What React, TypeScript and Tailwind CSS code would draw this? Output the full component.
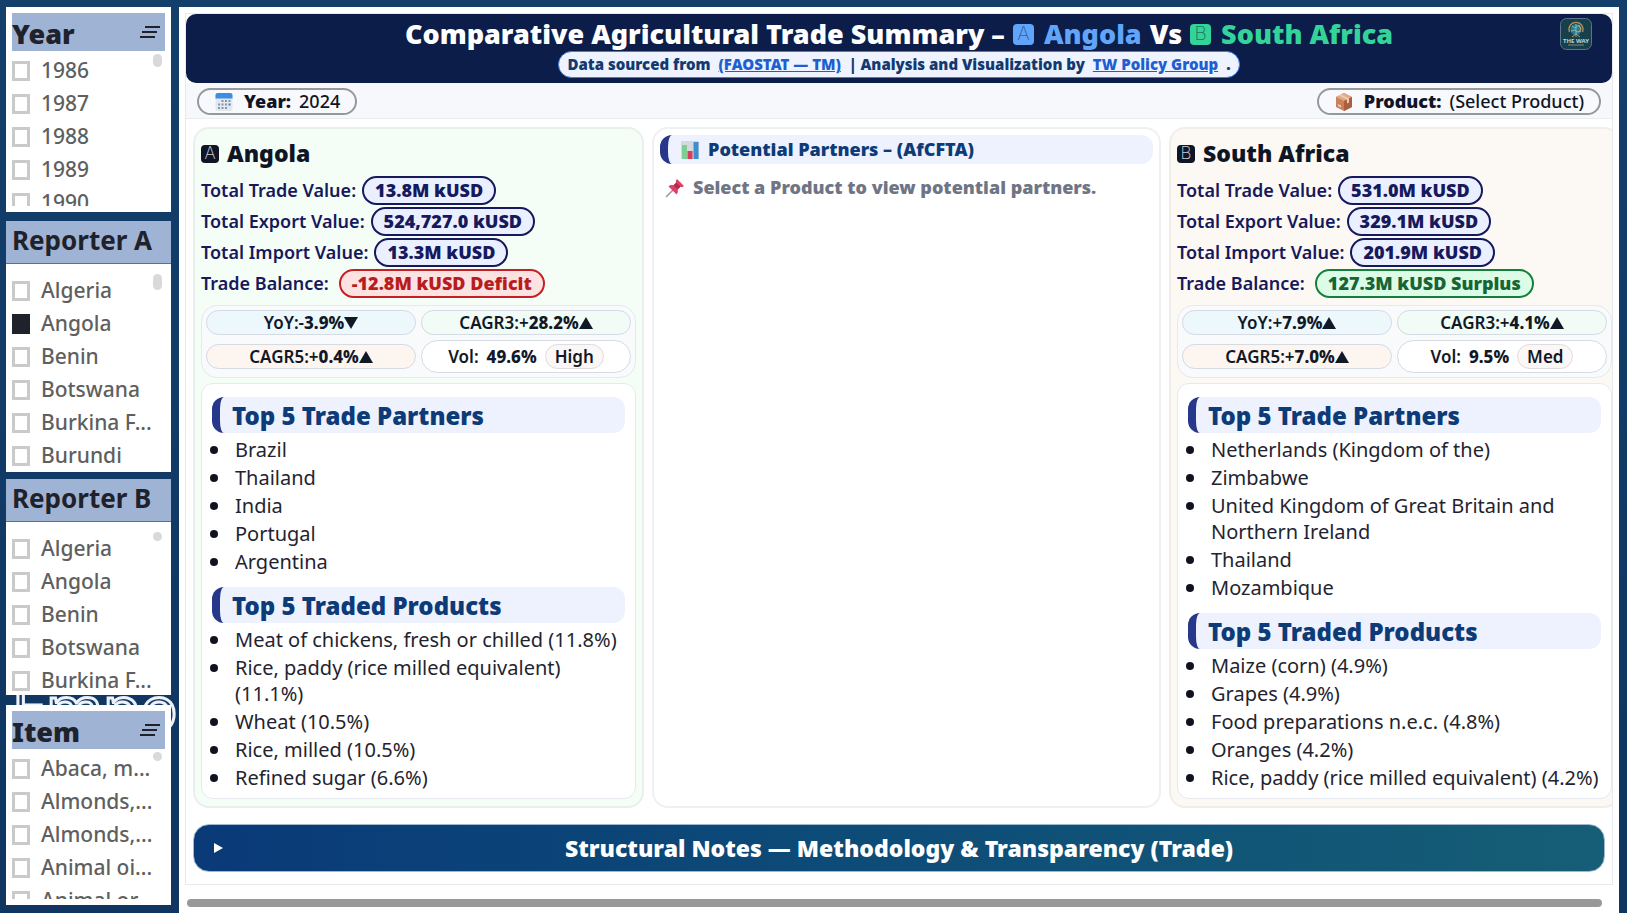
import type { ReactNode } from 'react';

type Tone = 'navy' | 'red' | 'green';

const tones: Record<Tone, string> = {
  navy: 'border-[#16195c] bg-[#eaf0ff] text-[#16195c]',
  red: 'border-[#c62026] bg-[#fde2e2] text-[#b91c1c]',
  green: 'border-[#15803d] bg-[#dcfce7] text-[#166534]',
};

const countryA = {
  letter: 'A',
  name: 'Angola',
  totals: [
    ['Total Trade Value:', '13.8M kUSD'],
    ['Total Export Value:', '524,727.0 kUSD'],
    ['Total Import Value:', '13.3M kUSD'],
  ],
  balance: '-12.8M kUSD Deficit',
  balanceTone: 'red' as Tone,
  yoy: ['-', '3.9%'],
  cagr3: ['+', '28.2%'],
  cagr5: ['+', '0.4%'],
  vol: ['49.6%', 'High'],
  partners: ['Brazil', 'Thailand', 'India', 'Portugal', 'Argentina'],
  products: [
    'Meat of chickens, fresh or chilled (11.8%)',
    'Rice, paddy (rice milled equivalent) (11.1%)',
    'Wheat (10.5%)',
    'Rice, milled (10.5%)',
    'Refined sugar (6.6%)',
  ],
};

const countryB: typeof countryA = {
  letter: 'B',
  name: 'South Africa',
  totals: [
    ['Total Trade Value:', '531.0M kUSD'],
    ['Total Export Value:', '329.1M kUSD'],
    ['Total Import Value:', '201.9M kUSD'],
  ],
  balance: '127.3M kUSD Surplus',
  balanceTone: 'green',
  yoy: ['+', '7.9%'],
  cagr3: ['+', '4.1%'],
  cagr5: ['+', '7.0%'],
  vol: ['9.5%', 'Med'],
  partners: [
    'Netherlands (Kingdom of the)',
    'Zimbabwe',
    'United Kingdom of Great Britain and Northern Ireland',
    'Thailand',
    'Mozambique',
  ],
  products: [
    'Maize (corn) (4.9%)',
    'Grapes (4.9%)',
    'Food preparations n.e.c. (4.8%)',
    'Oranges (4.2%)',
    'Rice, paddy (rice milled equivalent) (4.2%)',
  ],
};

function CalendarIcon() {
  return (
    <svg viewBox="0 0 20 20" className="w-5 h-5 shrink-0">
      <rect x="1.5" y="2" width="17" height="17" rx="2" fill="#e3e8ee" />
      <path d="M1.5 6.5V3a2 2 0 0 1 2-2h13a2 2 0 0 1 2 2v3.500z" fill="#3b8ee0" />
      <g fill="#8a97ab">
        <rect x="7.500" y="8" width="2" height="2" />
        <rect x="11" y="8" width="2" height="2" />
        <rect x="14.500" y="8" width="2" height="2" />
        <rect x="4" y="11.500" width="2" height="2" />
        <rect x="7.500" y="11.500" width="2" height="2" />
        <rect x="11" y="11.500" width="2" height="2" />
        <rect x="4" y="15" width="2" height="2" />
        <rect x="7.500" y="15" width="2" height="2" />
        <rect x="11" y="15" width="2" height="2" />
      </g>
      <rect x="14.500" y="11.500" width="2" height="2" fill="#2f7ad6" />
    </svg>
  );
}

function PackageIcon() {
  return (
    <svg viewBox="0 0 20 20" className="w-5 h-5 shrink-0">
      <path d="M10 1l8 4v10l-8 4-8-4V5z" fill="#c9825c" />
      <path d="M10 1l8 4-8 4-8-4z" fill="#e3a985" />
      <path d="M10 9l8-4v10l-8 4z" fill="#a9603f" />
      <path d="M5 3.500l8 4v4l2-1v-4l-8-4z" fill="#f0cdb4" />
      <path d="M4 12l3 1.500v2L4 14z" fill="#f0cdb4" />
    </svg>
  );
}

function ChartIcon() {
  return (
    <svg viewBox="0 0 20 20" className="w-5 h-5 shrink-0">
      <rect x="1" y="1" width="18" height="18" rx="1" fill="#d5d9de" />
      <rect x="2" y="5" width="5" height="14" fill="#7fcf95" />
      <rect x="7.500" y="11" width="5" height="8" fill="#dc3a5e" />
      <rect x="13.500" y="2" width="5" height="17" fill="#3f8fd0" />
    </svg>
  );
}

function PinIcon() {
  return (
    <svg viewBox="0 0 20 20" className="w-5 h-5 shrink-0">
      <path d="M8 12L1.500 18.500" stroke="#9a9aa5" strokeWidth="1.600" strokeLinecap="round" />
      <path d="M12 1l7 7-2 1.200-1.600-.4-2.800 2.800c.6 2 .2 3.600-1 4.900L3.500 8.400c1.300-1.200 3-1.600 4.900-1L11.200 4.600 10.800 3z" fill="#df3f63" />
      <path d="M11.200 4.600l4.200 4.200-2.800 2.800-4.200-4.200z" fill="#b9294c" />
    </svg>
  );
}

function LogoIcon() {
  return (
    <svg viewBox="0 0 32 32" className="w-8 h-8">
      <rect x=".5" y=".5" width="31" height="31" rx="6" fill="#17404a" stroke="#5a7590" />
      <path d="M9.500 14a7 7 0 1 1 13 0" fill="none" stroke="#b9905e" strokeWidth="1.300" />
      <circle cx="16" cy="11.500" r="5.500" fill="#2b7890" />
      <path d="M12 8l3 2 4-3 2 4M11 13l4-1 2 2 4-1M16 6v10" stroke="#8fbfae" strokeWidth=".9" fill="none" />
      <path d="M19 8l2 3-2 3" stroke="#c9a64e" strokeWidth="1" fill="none" />
      <path d="M16 15v4M12 19l4-3 4 3" stroke="#a59a7c" strokeWidth="1" fill="none" />
      <text x="16" y="25" textAnchor="middle" fontSize="6" fontWeight="700" fill="#c2d2d6">THE WAY</text>
      <path d="M8 27h16" stroke="#8ba3a8" strokeWidth=".8" />
    </svg>
  );
}

function TrendIcon({ down }: { down: boolean }) {
  return (
    <svg viewBox="0 0 14 12" className="w-[14px] h-3">
      <path d={down ? 'M0 0h14L7 12z' : 'M0 12h14L7 0z'} fill="#111827" />
    </svg>
  );
}

function LetterBox({ letter, className }: { letter: string; className: string }) {
  return (
    <span className={`inline-flex items-center justify-center rounded-sm font-['Inter'] font-extralight ${className}`}>
      {letter}
    </span>
  );
}

function FilterList({ items, checked, thumb }: { items: string[]; checked?: string; thumb: string }) {
  return (
    <div className="relative overflow-hidden flex-1">
      {items.map((item, i) => (
        <label key={i} className="flex items-center gap-[11px] h-[33px] text-[21px] font-medium text-[#5f5f5f]">
          <input
            type="checkbox"
            defaultChecked={item === checked}
            className="appearance-none w-[18px] h-5 shrink-0 border-3 border-[#cacaca] bg-white checked:bg-[#1f222b] checked:border-[#1f222b]"
          />
          <span className="whitespace-nowrap">{item}</span>
        </label>
      ))}
      <span className={`absolute right-[3px] top-0 w-[9px] rounded-full bg-[#d9d9dc] ${thumb}`} />
    </div>
  );
}

function SlicerHeader({ title }: { title: string }) {
  return (
    <div className="h-[38px] shrink-0 bg-[#9fb3d4] flex items-center justify-between pr-1">
      <h2 className="text-[27px] font-black text-[#1f222b] pt-1">{title}</h2>
      <svg viewBox="0 0 22 14" className="w-[22px] h-[14px]">
        <path d="M6 2h15M3 7h15M1 12h15" stroke="#1f222b" strokeWidth="2" />
      </svg>
    </div>
  );
}

function Heading({ children }: { children: ReactNode }) {
  return (
    <h3 className="h-9 pl-3 pt-[2px] flex items-center rounded-xl border-l-8 border-[#27378a] bg-[#eef1fe] text-[24px] font-black text-[#0d3b78]">
      {children}
    </h3>
  );
}

function Bullets({ items }: { items: string[] }) {
  return (
    <ul className="mt-1 text-[20px] leading-[26px] text-[#1f2430]">
      {items.map((item) => (
        <li
          key={item}
          className="relative pl-[23px] mb-[2px] before:absolute before:-left-[2px] before:top-[9px] before:size-2 before:rounded-full before:bg-[#10131f]"
        >
          {item}
        </li>
      ))}
    </ul>
  );
}

function Metric({ label, value, className }: { label: string; value: string[]; className: string }) {
  return (
    <div className={`h-[25px] rounded-full border border-[#d5dae3] flex items-center justify-center text-[17px] font-semibold text-[#111827] ${className}`}>
      {label}{value[0]}<b className="font-extrabold">{value[1]}</b>
      <TrendIcon down={value[0] === '-'} />
    </div>
  );
}

function CountryCard({ data, className }: { data: typeof countryA; className: string }) {
  return (
    <section className={`rounded-2xl border-2 px-[6px] pt-[7px] pb-[7px] flex flex-col ${className}`}>
      <h2 className="flex items-center gap-2 h-[35px] text-[23px] font-black text-[#0f1525]">
        <LetterBox letter={data.letter} className="w-[18px] h-[18px] text-[17px] bg-[#0f1525] text-[#c9cedb]" />
        {data.name}
      </h2>
      <div className="mt-1 text-[18px] font-semibold text-[#16195c]">
        {data.totals.map(([label, value]) => (
          <div key={label} className="flex items-center gap-[6px] h-[31px]">
            {label}
            <span className={`h-[29px] px-[11px] flex items-center rounded-full border-2 font-black ${tones.navy}`}>{value}</span>
          </div>
        ))}
        <div className="flex items-center gap-[10px] h-[31px]">
          Trade Balance:
          <span className={`h-[29px] px-[11px] flex items-center rounded-full border-2 font-black ${tones[data.balanceTone]}`}>{data.balance}</span>
        </div>
      </div>
      <div className="mt-[6px] p-1 grid grid-cols-2 gap-[5px] items-center rounded-2xl border border-[#e6e9ef] bg-[#f9fafc]">
        <Metric label="YoY:" value={data.yoy} className="bg-[#edf8fd]" />
        <Metric label="CAGR3:" value={data.cagr3} className="bg-[#f0fcf5]" />
        <Metric label="CAGR5:" value={data.cagr5} className="bg-[#fdf5ef]" />
        <div className="h-[33px] rounded-full border border-[#d5dae3] bg-white flex items-center justify-center gap-2 text-[17px] font-semibold text-[#111827]">
          Vol: <b className="font-extrabold">{data.vol[0]}</b>
          <span className="h-[25px] px-[9px] flex items-center rounded-full border border-[#e0dcdc] bg-[#fbf7f6]">{data.vol[1]}</span>
        </div>
      </div>
      <div className="mt-[5px] flex-1 rounded-xl border border-[#e6e9ef] bg-white px-[10px] pt-[13px] pb-[5px]">
        <Heading>Top 5 Trade Partners</Heading>
        <Bullets items={data.partners} />
        <div className="h-[10px]" />
        <Heading>Top 5 Traded Products</Heading>
        <Bullets items={data.products} />
      </div>
    </section>
  );
}

export default function App() {
  return (
    <div className="relative isolate flex gap-2 h-screen overflow-hidden bg-[#123a66] bg-linear-to-b from-[#143f6b] to-[#0f3560] pl-[6px] pr-2 pt-[7px] font-['Noto_Sans',sans-serif]">
      <div className="absolute -z-10 left-3 top-[676px] text-[61px] leading-none text-[#123a66] [-webkit-text-stroke:3px_#eef2f8]">Empo</div>

      <aside className="w-[165px] shrink-0 flex flex-col">
        <section className="h-[205px] bg-white p-[6px] flex flex-col">
          <SlicerHeader title="Year" />
          <div className="h-[3px]" />
          <FilterList items={['1986', '1987', '1988', '1989', '1990']} thumb="h-[13px]" />
        </section>
        <section className="mt-[9px] h-[251px] bg-white flex flex-col">
          <h2 className="h-[43px] shrink-0 px-[6px] pb-[3px] flex items-center bg-[#9fb3d4] border-b border-[#5d6f92] text-[26px] font-bold text-[#1f222b]">Reporter A</h2>
          <div className="flex flex-col flex-1 overflow-hidden px-[6px] pt-[10px]">
            <FilterList items={['Algeria', 'Angola', 'Benin', 'Botswana', 'Burkina F...', 'Burundi']} checked="Angola" thumb="h-4" />
          </div>
        </section>
        <section className="mt-[7px] h-[216px] bg-white flex flex-col">
          <h2 className="h-[43px] shrink-0 px-[6px] pb-[3px] flex items-center bg-[#9fb3d4] border-b border-[#5d6f92] text-[26px] font-bold text-[#1f222b]">Reporter B</h2>
          <div className="flex flex-col flex-1 overflow-hidden px-[6px] pt-[10px]">
            <FilterList items={['Algeria', 'Angola', 'Benin', 'Botswana', 'Burkina F...']} thumb="h-[9px]" />
          </div>
        </section>
        <section className="mt-[10px] h-[200px] bg-white p-[6px] flex flex-col">
          <SlicerHeader title="Item" />
          <div className="h-[3px]" />
          <FilterList items={['Abaca, m...', 'Almonds,...', 'Almonds,...', 'Animal oi...', 'Animal or...']} thumb="h-[9px]" />
        </section>
      </aside>

      <main className="flex-1 min-w-0 bg-white px-[6px] pt-[6px]">
        <div className="overflow-hidden border border-[#e8e9ee] pb-3">
          <header className="relative h-[69px] rounded-[10px] bg-[#0b1d48] flex flex-col items-center">
            <h1 className="flex items-center gap-2 h-[41px] text-[27px] font-black text-white whitespace-nowrap">
              Comparative Agricultural Trade Summary –
              <span className="flex items-center gap-[10px] text-[#60a5fa]">
                <LetterBox letter="A" className="w-[21px] h-[21px] text-[19px] bg-[#60a5fa] text-[#2f5fa8]" />
                Angola
              </span>
              Vs
              <span className="flex items-center gap-[10px] text-[#34d399]">
                <LetterBox letter="B" className="w-[21px] h-[21px] text-[19px] bg-[#34d399] text-[#177a5a]" />
                South Africa
              </span>
            </h1>
            <p className="-mt-1 h-[27px] px-2 flex items-center gap-2 rounded-full border border-[#3c7de0] bg-[#eef3ff] text-[15px] font-black text-[#123a70] whitespace-nowrap">
              Data sourced from
              <a href="#faostat" className="text-[#1d5fd0] underline">(FAOSTAT — TM)</a>
              | Analysis and Visualization by
              <a href="#tw" className="text-[#1d5fd0] underline">TW Policy Group</a>
              .
            </p>
            <div className="absolute right-5 top-1"><LogoIcon /></div>
          </header>

          <div className="h-9 px-[11px] pt-[2px] flex items-center justify-between bg-[#f7f8fb] border-b border-[#ebecf0] text-[18px] text-[#0f1525]">
            <div className="h-[27px] px-[15px] flex items-center gap-2 rounded-full border-2 border-[#96989f] bg-[#f8f9fc] font-medium">
              <CalendarIcon />
              <b className="pl-[2px] font-black">Year:</b> 2024
            </div>
            <div className="h-[27px] px-[15px] flex items-center gap-2 rounded-full border-2 border-[#96989f] bg-[#f8f9fc] font-medium">
              <PackageIcon />
              <b className="pl-[2px] font-black">Product:</b> (Select Product)
            </div>
          </div>

          <div className="mt-2 ml-[7px] -mr-2 grid grid-cols-[451fr_509fr_451fr] gap-2">
            <CountryCard data={countryA} className="border-[#e8f0ec] bg-[#f5fdf7]" />
            <section className="rounded-2xl border-2 border-[#eff0f2] bg-white px-[6px] pt-[6px]">
              <h3 className="h-[29px] pl-3 flex items-center gap-2 rounded-xl border-l-8 border-[#27378a] bg-[#eef1fe] text-[18px] font-black text-[#0d3b78]">
                <ChartIcon />
                Potential Partners – (AfCFTA)
              </h3>
              <p className="mt-[10px] pl-[5px] flex items-center gap-2 text-[18px] font-black text-[#6f7585]">
                <PinIcon />
                Select a Product to view potential partners.
              </p>
            </section>
            <CountryCard data={countryB} className="border-[#f1ede9] bg-[#fcf8f3]" />
          </div>

          <button className="relative mt-4 mx-[7px] w-[calc(100%-14px)] h-12 rounded-2xl border border-[#9db8cf] bg-linear-to-r from-[#0a3a78] to-[#165e76] flex items-center justify-center text-[23px] font-black text-white">
            <span className="absolute left-5 border-y-[5px] border-y-transparent border-l-[9px] border-l-white" />
            Structural Notes — Methodology &amp; Transparency (Trade)
          </button>
        </div>
        <div className="mt-[14px] mx-[2px] mr-[11px] h-2 rounded-full bg-[#999999]" />
      </main>
    </div>
  );
}
